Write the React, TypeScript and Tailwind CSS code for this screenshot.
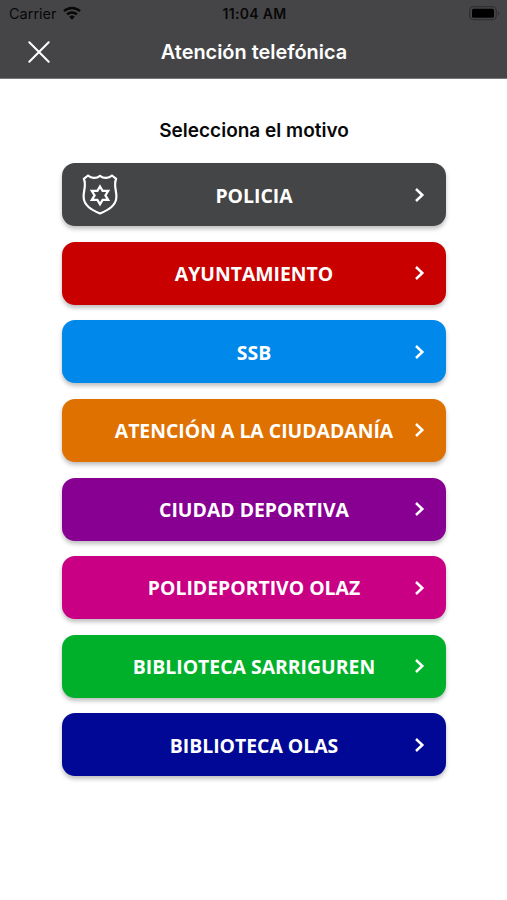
const REASONS = [
  { name: "POLICIA", color: "bg-[#444546]", shield: true },
  { name: "AYUNTAMIENTO", color: "bg-[#c80000]" },
  { name: "SSB", color: "bg-[#0088eb]" },
  { name: "ATENCIÓN A LA CIUDADANÍA", color: "bg-[#df7100]" },
  { name: "CIUDAD DEPORTIVA", color: "bg-[#870092]" },
  { name: "POLIDEPORTIVO OLAZ", color: "bg-[#c90084]" },
  { name: "BIBLIOTECA SARRIGUREN", color: "bg-[#00b02a]" },
  { name: "BIBLIOTECA OLAS", color: "bg-[#000895]" },
]

function WifiIcon() {
  return (
    <svg width="18" height="14" viewBox="0 0 18 14" fill="none" stroke="#080808" strokeWidth="2.4">
      <path d="M1 5.2a11.6 11.6 0 0 1 16 0" />
      <path d="M4.1 8.4a7.2 7.2 0 0 1 9.8 0" />
      <path d="M6.2 10.8a4.1 4.1 0 0 1 5.600 0L9 13.700z" fill="#080808" stroke="none" />
    </svg>
  )
}

function BatteryIcon() {
  return (
    <svg width="31" height="15" viewBox="0 0 31 15">
      <rect x="0.7" y="0.7" width="26.6" height="13" rx="4" fill="#454547" stroke="#303032" strokeWidth="1.3" />
      <rect x="3" y="2.7" width="22" height="9" rx="1.5" fill="#000" />
      <path d="M29 5.2c1.700.6 1.700 3.600 0 4.200z" fill="#303032" />
    </svg>
  )
}

function ShieldIcon() {
  return (
    <svg width="36" height="41" viewBox="0 0 36 41" fill="none" stroke="#fff" strokeWidth="2.2" strokeLinejoin="round">
      <path d="M6 1.500C9.200 4.500 14.400 4.800 18 1.800C21.600 4.800 26.800 4.500 30 1.500L34.200 4.800C31.200 11 34.800 17 34.400 23C34 31.500 27 35.800 18 39.500C9 35.800 2 31.500 1.600 23C1.200 17 4.800 11 1.800 4.800z" />
      <path d="M18 12.500l2.600 4.400h5.600l-2.800 4.500 2.800 4.500h-5.600L18 30.300l-2.600-4.400H9.800l2.800-4.500-2.800-4.500h5.600z" strokeLinejoin="miter" />
    </svg>
  )
}

export default function App() {
  return (
    <div className="h-[900px] w-[507px] overflow-hidden bg-white font-['Inter','Liberation_Sans',sans-serif]">
      <header className="h-[79px] border-b border-[#77777a] bg-[#454547]">
        <div className="grid h-[27px] grid-cols-3 items-center pr-[7px] pl-[9px] text-[#080808]">
          <div className="flex items-center gap-[6px]">
            <span className="pt-[1px] text-[14.500px] leading-none">Carrier</span>
            <span className="-mt-[2px]"><WifiIcon /></span>
          </div>
          <span className="text-center text-[14px] leading-none font-semibold tracking-[0.3px]">11:04 AM</span>
          <div className="flex justify-end">
            <BatteryIcon />
          </div>
        </div>
        <div className="grid h-[50px] grid-cols-[80px_1fr_80px] items-center">
          <button className="ml-[28px] w-[22px]" aria-label="Cerrar">
            <svg width="22" height="22" viewBox="0 0 22 22" stroke="#fff" strokeWidth="2" strokeLinecap="round">
              <path d="M1.300 1.300l19.400 19.400M20.700 1.300L1.300 20.700" />
            </svg>
          </button>
          <h1 className="pt-[1px] pl-[1px] text-center text-[19.900px] leading-none font-semibold whitespace-nowrap text-white">Atención telefónica</h1>
        </div>
      </header>

      <main className="flex flex-col items-center pt-[40px]">
        <h2 className="h-[24px] pl-[1px] text-[19px] leading-[24px] font-semibold text-[#080808]">Selecciona el motivo</h2>
        <div className="mt-[20.300px] flex w-[384px] flex-col gap-[15.570px]">
          {REASONS.map((r) => (
            <button
              key={r.name}
              className={`grid h-[63px] grid-cols-[60px_minmax(0,1fr)_60px] items-center rounded-[13px] shadow-[0_3px_4px_rgba(0,0,0,0.25)] ${r.color}`}
            >
              <span className="pb-[1px] pl-[20px]">{r.shield && <ShieldIcon />}</span>
              <span className="flex justify-center pt-[1px] pl-[1px] font-['Open_Sans','Noto_Sans',sans-serif] text-[19.400px] leading-none font-bold whitespace-nowrap text-white">
                {r.name}
              </span>
              <svg className="ml-[28px]" width="12" height="16" viewBox="0 0 12 16" fill="none" stroke="#fff" strokeWidth="2.500">
                <path d="M2 2l6.300 6L2 14" />
              </svg>
            </button>
          ))}
        </div>
      </main>
    </div>
  )
}
